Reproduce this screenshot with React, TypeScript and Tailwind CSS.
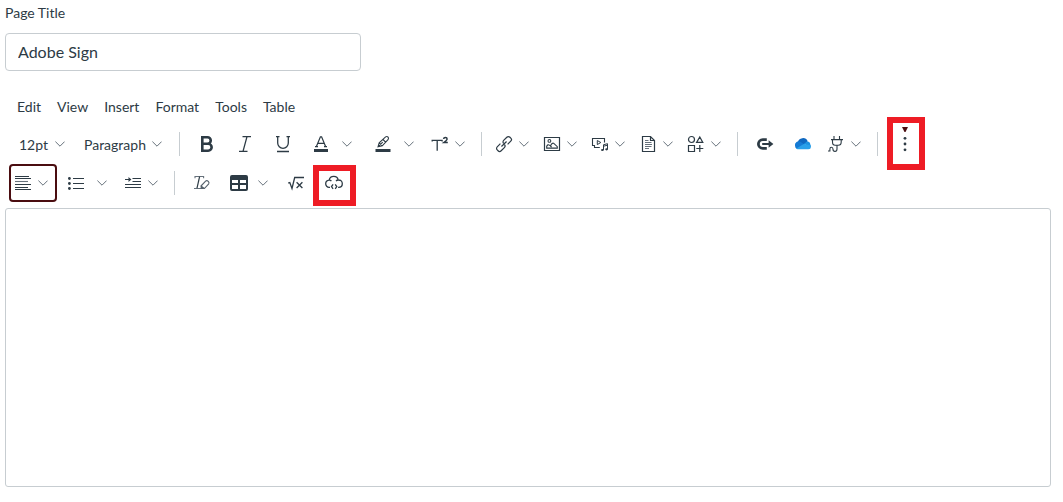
import { useState } from "react";

interface IconProps {
    children: React.ReactNode;
    className?: string;
}

function Icon({ children, className = "" }: IconProps) {
    return(
        <svg viewBox="0 0 18 18" fill="none" stroke="currentColor" className={`size-[18px] shrink-0 ${className}`} aria-hidden="true">
            { children }
        </svg>
    )
}

function Chevron() {
    return(
        <svg viewBox="0 0 10 6" fill="none" stroke="#66717b" strokeWidth={1} className="w-[10px] h-[6px] shrink-0 pointer-events-none" aria-hidden="true">
            <path d="M0.4 0.6 5 5.2 9.6 0.6" />
        </svg>
    )
}

function BoldIcon() {
    return(
        <Icon>
            <path strokeWidth={2.6} d="M4 2.3h5.5a3.2 3.2 0 0 1 0 6.5H4M4.3 1v16M4 15.7h6.2a3.4 3.4 0 0 0 0-6.9H4" />
        </Icon>
    )
}

function ItalicIcon() {
    return(
        <Icon>
            <path strokeWidth={1.3} d="M6.5 1.6H15M3 16.4h8.5M11 1.6 7 16.4" />
        </Icon>
    )
}

function UnderlineIcon() {
    return(
        <Icon>
            <path strokeWidth={1.3} d="M2 1.6h3.5M12.5 1.6H16M3.7 1.6V8a5.3 5.3 0 0 0 10.6 0V1.6M3 16.5h12" />
        </Icon>
    )
}

function TextColorIcon() {
    return(
        <Icon>
            <path strokeWidth={1.2} d="M4.2 12 8.4 1.8h1.2L13.8 12M5.9 8.3h6.2M3 11.7h3M12 11.7h3" />
            <path fill="currentColor" stroke="none" d="M2 14h14v3H2z" />
        </Icon>
    )
}

function HighlightIcon() {
    return(
        <Icon>
            <path strokeWidth={1.1} d="M4 11.8 5.2 7.9 11.6 1.9Q13 1 14.1 2.1 15 3.3 14 4.7L8.3 10.8ZM5.3 7.9 8.2 10.8M4 11.8 8.7 7.2M9 4.5l2.6 2.7" />
            <path fill="currentColor" stroke="none" d="M1.5 14h15v3h-15z" />
        </Icon>
    )
}

function SuperscriptIcon() {
    return(
        <Icon>
            <path strokeWidth={1.3} d="M1.2 6.4V5.4h9.9v1M6.2 5.4v10.3" />
            <path strokeWidth={1.5} d="M12.6 4Q12.7 2.4 14.4 2.4 16.1 2.4 16.1 3.9 16.1 5 12.8 7.6H16.8" />
        </Icon>
    )
}

function LinkIcon() {
    return(
        <Icon>
            <g transform="rotate(-45 9 9)" strokeWidth={1.2}>
                <path d="M6.7 6.2H2.2A2.2 2.2 0 0 0 0 8.4v1.2a2.2 2.2 0 0 0 2.2 2.2h4.5a2.2 2.2 0 0 0 2.2-2.2" />
                <path d="M11.3 11.8h4.5a2.2 2.2 0 0 0 2.2-2.2V8.4a2.2 2.2 0 0 0-2.2-2.2h-4.5a2.2 2.2 0 0 0-2.2 2.2" />
                <path d="M5.4 9h7.2" />
            </g>
        </Icon>
    )
}

function ImageIcon() {
    return(
        <Icon>
            <path strokeWidth={1.2} d="M1.5 2.5h15v13h-15z" />
            <path strokeWidth={1.1} d="M3.7 13.1v-1.9q1.2-2.1 2.6-1.1l1.2.9q1.6-3.6 3.3-2.6l3.5 3.3v1.4zM7.4 11l1.2 1" />
            <circle cx="6.4" cy="5.9" r="1.4" strokeWidth={1.1} />
        </Icon>
    )
}

function MediaIcon() {
    return(
        <Icon>
            <path strokeWidth={1.1} d="M8.8 12.5H3.5V10.5H1.5V3.5h12v4" />
            <path strokeWidth={1} d="M6.3 5.5v4.1L9.8 7.5ZM12.5 15V9.7l4-1v5.4M12.5 11.2l4-1" />
            <ellipse cx="11.4" cy="15" rx="1.4" ry="1.1" fill="currentColor" stroke="none" />
            <ellipse cx="15.6" cy="14.3" rx="1.4" ry="1.1" fill="currentColor" stroke="none" />
        </Icon>
    )
}

function DocumentIcon() {
    return(
        <Icon>
            <path strokeWidth={1.2} d="M3.5 1.5h8l4 4v11h-12zM11.5 1.5v4h4" />
            <path strokeWidth={1} stroke="#66717b" d="M6 5.5h3.5M6 7.5h6.5M6 9.5h7M6 11.5h6.5M6 13.5h4" />
        </Icon>
    )
}

function AppsIcon() {
    return(
        <Icon>
            <circle cx="4.5" cy="4.5" r="3" strokeWidth={1.2} />
            <path strokeWidth={1.2} d="M12.8 2 15.8 7.4H9.6ZM1.5 10.5h6v6h-6zM12.8 10v7M9.3 13.5h7" />
        </Icon>
    )
}

function ExternalToolIcon() {
    return(
        <Icon>
            <path strokeWidth={2.8} d="M10.8 4.6H6.8A4.4 4.4 0 0 0 6.8 13.4H10.8" />
            <path strokeWidth={2} d="M6.2 9h7" />
            <path fill="currentColor" stroke="none" d="M12.6 5.2 17.4 9l-4.8 3.8z" />
        </Icon>
    )
}

function OneDriveIcon() {
    return(
        <Icon>
            <g stroke="none">
                <path fill="#0f68c0" d="M3.8 7.4A5.2 5.2 0 0 1 13.7 6.3L9.8 10.3Z" />
                <path fill="#157ad4" d="M1 10.8A3.7 3.7 0 0 1 6.7 6.9L11 9.7 3 14A3.6 3.6 0 0 1 1 10.8Z" />
                <path fill="#1b91e0" d="M9.6 8.9 13.1 6.4Q16 6.2 16.3 9.3L17 12Z" />
                <path fill="#29a0ea" d="M2.3 13.4 9.8 9.1 16.6 10.3Q17.8 14.3 14.2 14.3H4.5Q3.2 14.3 2.3 13.4Z" />
            </g>
        </Icon>
    )
}

function PlugIcon() {
    return(
        <Icon>
            <path strokeWidth={1.1} d="M7 1v3.5M12.5 1v3.5M4 4.6h12M5.5 4.8V7q0 3.3 2.7 3.3h3Q14.2 10.3 14.2 7V4.8M10 10.4V14q0 2.4-2 2.4-2 0-2-2.2 0-2-1.6-2-1.5 0-1.5 1.9V16H1" />
        </Icon>
    )
}

function MoreIcon() {
    return(
        <Icon>
            <g fill="currentColor" stroke="none">
                <circle cx="9" cy="3.3" r="1.4" />
                <circle cx="9" cy="9" r="1.4" />
                <circle cx="9" cy="14.8" r="1.4" />
            </g>
        </Icon>
    )
}

function AlignIcon() {
    return(
        <Icon>
            <path d="M1 2.5h14M1 4.5h16M1 10.5h16M1 13.5h13M1 15.5h16" strokeWidth={1.1} />
            <path d="M1 7.5h13" stroke="#66717b" strokeWidth={1.1} />
        </Icon>
    )
}

function BulletsIcon() {
    return(
        <Icon>
            <path strokeWidth={1.2} d="M6 4.5h11M6 9.5h11M6 14.5h11" />
            <g fill="currentColor" stroke="none">
                <circle cx="2.4" cy="4.5" r="1.4" />
                <circle cx="2.4" cy="9.5" r="1.4" />
                <circle cx="2.4" cy="14.5" r="1.4" />
            </g>
        </Icon>
    )
}

function IndentIcon() {
    return(
        <Icon>
            <path strokeWidth={1.1} d="M8.5 4.5H17M8.5 7.5H17M1 10.5h16M1 13.5h16M1 5.5h5.5" />
            <path fill="currentColor" stroke="none" d="M4.5 3.1 7.4 5.5 4.5 7.9z" />
        </Icon>
    )
}

function ClearFormatIcon() {
    return(
        <Icon>
            <path strokeWidth={1.1} stroke="#66717b" d="M2 4.3V2.5h8.6v1.8M1 14.5h7" />
            <path strokeWidth={1.2} d="M6.6 2.6 4 14.2" />
            <path strokeWidth={1.1} stroke="#55616b" d="M8 12 12.6 7.1Q13.8 6 15.3 7.3 16.5 8.6 15.7 9.8L11.4 14.5H8.3ZM8 12 11.3 14.4" />
        </Icon>
    )
}

function TableIcon() {
    return(
        <Icon>
            <path fill="currentColor" fillRule="evenodd" stroke="none" d="M2 1h14q2 0 2 2v12q0 2-2 2H2q-2 0-2-2V3q0-2 2-2ZM2 6v3h6V6ZM10 6v3h6V6ZM2 11v4h6v-4ZM10 11v4h6v-4Z" />
        </Icon>
    )
}

function EquationIcon() {
    return(
        <Icon>
            <path strokeWidth={1.3} d="M1.2 9.2 2.8 8.5 5 14.5 7.7 3.5H17M9.6 8.3 15.4 14M15.4 8.3 9.6 14" />
        </Icon>
    )
}

function CloudCodeIcon() {
    return(
        <Icon>
            <path strokeWidth={1.3} d="M5 13.4H4.1A3.5 3.5 0 0 1 .7 9.8Q.7 6.6 4.2 6.2 4.8 2.4 8.8 2.4 12.5 2.4 13.2 6 17.3 5.9 17.3 9.7 17.3 13.4 13.6 13.4H13.1M13.2 6Q11.8 6 11.1 7.1M4.2 6.2Q5.6 6.1 6.4 7.2" />
            <path strokeWidth={1.3} d="M8.1 10.4 6.5 12.6 8.1 14.9M10.2 10.4l1.6 2.2-1.6 2.3" />
        </Icon>
    )
}

type ButtonSize = "icon" | "compact" | "medium" | "wide";

// icon side padding and chevron distance differ for plain, menu and split buttons
const SIZES: Record<ButtonSize, string> = {
    icon: "w-[38px] justify-center",
    compact: "w-12 pl-[5px] gap-[6px]",
    medium: "w-14 pl-[9px] gap-[10px]",
    wide: "w-[62px] pl-[10px] gap-[12px]",
};

interface ToolButtonProps {
    label: string;
    size?: ButtonSize;
    focused?: boolean;
    children: React.ReactNode;
}

function ToolButton({ label, size = "icon", focused = false, children }: ToolButtonProps) {
    return(
        <button type="button" aria-label={label} title={label} className={`relative flex shrink-0 items-center h-[38px] rounded ${SIZES[size]} ${focused ? "ring-2 ring-inset ring-[#4a0d10]" : ""}`}>
            { children }
            { size !== "icon" && <Chevron /> }
        </button>
    )
}

interface ToolSelectProps {
    label: string;
    value: string;
    className: string;
}

function ToolSelect({ label, value, className }: ToolSelectProps) {
    return(
        <label className={`flex shrink-0 items-center h-[38px] pl-[10px] gap-[6px] ${className}`}>
            <select aria-label={label} defaultValue={value} className="appearance-none bg-transparent pt-[2px] text-sm">
                <option>{value}</option>
            </select>
            <Chevron />
        </label>
    )
}

function Separator() {
    return <div className="shrink-0 w-px h-6 ml-[7px] mr-2 bg-[#c7cdd1]"></div>
}

const MENUS = ["Edit", "View", "Insert", "Format", "Tools", "Table"];

function MenuBar() {
    return(
        <nav className="flex pl-1 mt-6 h-6 items-center">
            {
                MENUS.map((menu) => (
                    <button key={menu} type="button" className="px-2 text-sm">{menu}</button>
                ))
            }
        </nav>
    )
}

function Toolbar() {
    return(
        <div className="flex flex-col gap-px pl-1 mt-[6px]">
            <div className="flex items-center">
                <ToolSelect label="Font size" value="12pt" className="w-[65px]" />
                <ToolSelect label="Block" value="Paragraph" className="w-[98px]" />
                <Separator />
                <ToolButton label="Bold"><BoldIcon /></ToolButton>
                <ToolButton label="Italic"><ItalicIcon /></ToolButton>
                <ToolButton label="Underline"><UnderlineIcon /></ToolButton>
                <ToolButton label="Text color" size="wide"><TextColorIcon /></ToolButton>
                <ToolButton label="Background color" size="wide"><HighlightIcon /></ToolButton>
                <ToolButton label="Superscript" size="compact"><SuperscriptIcon /></ToolButton>
                <Separator />
                <ToolButton label="Links" size="compact"><LinkIcon /></ToolButton>
                <ToolButton label="Images" size="compact"><ImageIcon /></ToolButton>
                <ToolButton label="Media" size="compact"><MediaIcon /></ToolButton>
                <ToolButton label="Documents" size="compact"><DocumentIcon /></ToolButton>
                <ToolButton label="Icons" size="compact"><AppsIcon /></ToolButton>
                <Separator />
                <ToolButton label="External tool"><ExternalToolIcon /></ToolButton>
                <ToolButton label="OneDrive"><OneDriveIcon /></ToolButton>
                <ToolButton label="Apps" size="compact"><PlugIcon /></ToolButton>
                <Separator />
                <ToolButton label="More">
                    <MoreIcon />
                    <svg viewBox="0 0 6 5" className="absolute top-[2px] left-4 w-[6px] h-[5px]" aria-hidden="true">
                        <path fill="#4a0d10" d="M0 0h6L3.5 5h-1z" />
                    </svg>
                    <span className="absolute -top-2 left-px w-[38px] h-[53px] border-6 border-[#ee1c25]"></span>
                </ToolButton>
            </div>
            <div className="flex items-center">
                <ToolButton label="Align" size="compact" focused><AlignIcon /></ToolButton>
                <ToolButton label="Lists" size="wide"><BulletsIcon /></ToolButton>
                <ToolButton label="Indent" size="compact"><IndentIcon /></ToolButton>
                <Separator />
                <ToolButton label="Clear formatting"><ClearFormatIcon /></ToolButton>
                <ToolButton label="Table" size="medium"><TableIcon /></ToolButton>
                <ToolButton label="Equation"><EquationIcon /></ToolButton>
                <ToolButton label="Embed">
                    <CloudCodeIcon />
                    <span className="absolute top-px -left-[2px] w-[43px] h-[41px] border-6 border-[#ee1c25]"></span>
                </ToolButton>
            </div>
        </div>
    )
}

export default function App() {
    const [title, setTitle] = useState("Adobe Sign");

    return(
        <div className="bg-white pl-[5px] pr-3 pb-4 font-['Lato',sans-serif] text-[#2d3b45]">
            <label htmlFor="page-title" className="block pt-[3px] text-sm">Page Title</label>
            <input
                id="page-title"
                type="text"
                value={title}
                onChange={(e) => setTitle(e.target.value)}
                className="block mt-[10px] w-full max-w-[356px] h-[38px] px-3 pb-[2px] text-base rounded border border-[#c7cdd1]"
            />
            <MenuBar />
            <Toolbar />
            <textarea aria-label="Page content" className="block mt-[6px] w-full h-[279px] p-3 resize-none rounded-[3px] border border-[#c7cdd1]"></textarea>
        </div>
    )
}
